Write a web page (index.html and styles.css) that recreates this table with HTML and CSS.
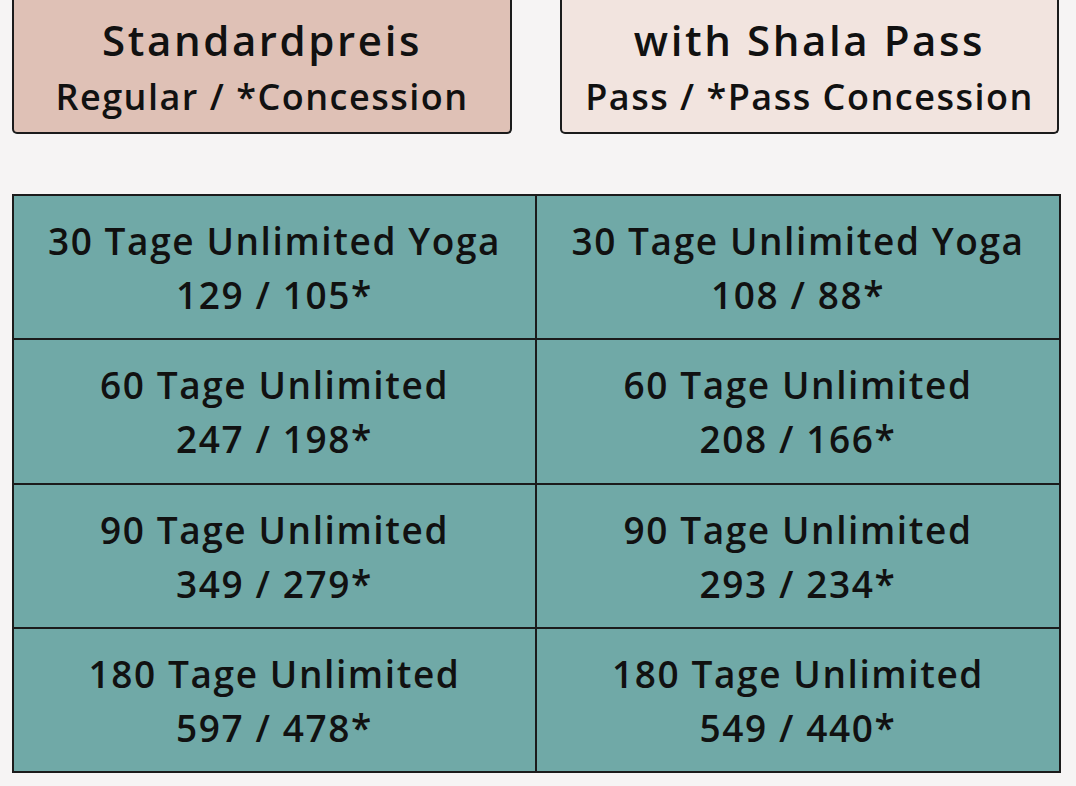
FILE: index.html
```html
<!DOCTYPE html>
<html lang="de">
<head>
<meta charset="utf-8">
<title>Preise</title>
<link rel="stylesheet" href="styles.css">
</head>
<body>
<div class="page">
  <div class="heads">
    <div class="head head-std">
      <div class="head-title">Standardpreis</div>
      <div class="head-sub">Regular / *Concession</div>
    </div>
    <div class="head head-pass">
      <div class="head-title">with Shala Pass</div>
      <div class="head-sub">Pass / *Pass Concession</div>
    </div>
  </div>
  <div class="grid">
    <div class="cell"><div class="name">30 Tage Unlimited Yoga</div><div class="price">129 / 105*</div></div>
    <div class="cell"><div class="name">30 Tage Unlimited Yoga</div><div class="price">108 / 88*</div></div>
    <div class="cell"><div class="name">60 Tage Unlimited</div><div class="price">247 / 198*</div></div>
    <div class="cell"><div class="name">60 Tage Unlimited</div><div class="price">208 / 166*</div></div>
    <div class="cell"><div class="name">90 Tage Unlimited</div><div class="price">349 / 279*</div></div>
    <div class="cell"><div class="name">90 Tage Unlimited</div><div class="price">293 / 234*</div></div>
    <div class="cell"><div class="name">180 Tage Unlimited</div><div class="price">597 / 478*</div></div>
    <div class="cell"><div class="name">180 Tage Unlimited</div><div class="price">549 / 440*</div></div>
  </div>
</div>
</body>
</html>
```
FILE: styles.css
```css
html, body {
  margin: 0;
  padding: 0;
  background: #f6f4f4;
}
body {
  font-family: "Open Sans", "Noto Sans", sans-serif;
  font-weight: 600;
  color: #111;
  width: 1076px;
  height: 786px;
  overflow: hidden;
}
.page {
  padding: 0 16px 0 12px;
}
.heads {
  display: flex;
  gap: 48px;
}
.head {
  box-sizing: border-box;
  width: 500px;
  height: 134px;
  border: 2px solid #1b1b1b;
  border-top: none;
  border-radius: 0 0 5px 5px;
  display: flex;
  flex-direction: column;
  align-items: center;
  padding-top: 12px;
}
.head-std { background: #dfc1b6; }
.head-pass { background: #f2e4df; width: 499px; }
.head-title {
  font-size: 42px;
  line-height: 56px;
  letter-spacing: 2.6px;
}
.head-sub {
  font-size: 36px;
  line-height: 58px;
  letter-spacing: 1.5px;
}
.grid {
  margin-top: 60px;
  box-sizing: border-box;
  width: 1049px;
  display: grid;
  grid-template-columns: 521px 1fr;
  grid-auto-rows: 142.25px;
  background: #1b1b1b;
  border: 2px solid #1b1b1b;
  gap: 2px;
}
.cell {
  background: #70a9a7;
  display: flex;
  flex-direction: column;
  align-items: center;
  padding-top: 18px;
}
.name, .price {
  font-size: 37px;
  line-height: 54px;
  letter-spacing: 1.6px;
}
```
